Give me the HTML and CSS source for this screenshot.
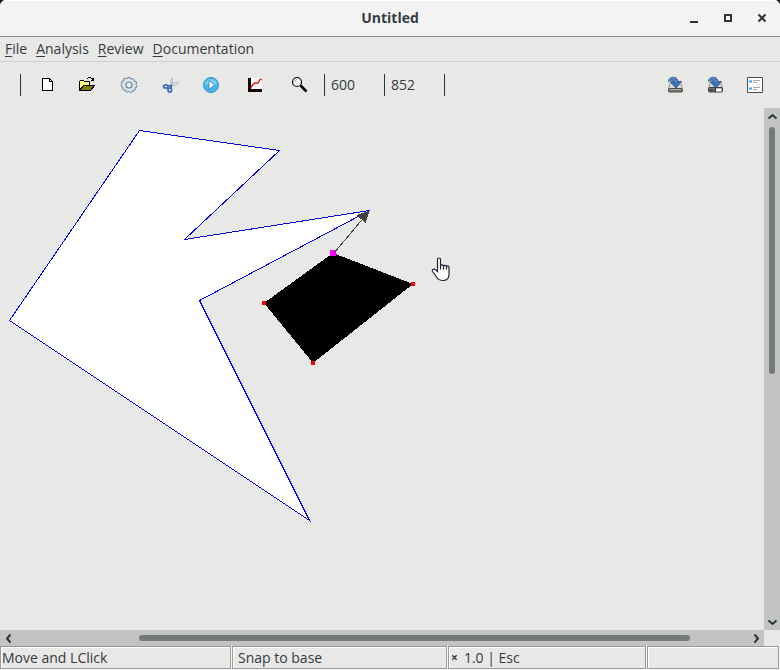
FILE: index.html
```html
<!DOCTYPE html>
<html lang="en">
<head>
<meta charset="utf-8">
<title>Untitled</title>
<link rel="stylesheet" href="styles.css">
</head>
<body>
<div class="window">
  <header class="titlebar">
    <h1 class="title">Untitled</h1>
    <div class="window-buttons">
      <button type="button" class="window-button" aria-label="Minimize"><svg width="16" height="16" viewBox="0 0 16 16"><path d="M4 11h8v2H4z"/></svg></button>
      <button type="button" class="window-button" aria-label="Maximize"><svg width="16" height="16" viewBox="0 0 16 16"><path fill-rule="evenodd" d="M4 4h8v8H4zM6 6v4h4V6z"/></svg></button>
      <button type="button" class="window-button" aria-label="Close"><svg width="16" height="16" viewBox="0 0 16 16"><path d="M4.500 4.500l7 7M11.500 4.500l-7 7" fill="none" stroke="#2e3436" stroke-width="2"/></svg></button>
    </div>
  </header>

  <nav class="menubar" aria-label="Menu">
    <a class="menu" href="#file"><u>F</u>ile</a>
    <a class="menu" href="#analysis"><u>A</u>nalysis</a>
    <a class="menu" href="#review"><u>R</u>eview</a>
    <a class="menu" href="#documentation"><u>D</u>ocumentation</a>
  </nav>

  <div class="toolbar" role="toolbar" aria-label="Tools">
    <span class="separator"></span>
    <div class="tools">
      <button type="button" class="tool" aria-label="New">
        <svg class="icon" viewBox="0 0 24 24" shape-rendering="crispEdges"><path d="M9.500 5.500h7l3 3v9h-10z" fill="#fff" stroke="#000"/><path d="M16.500 5.500v3h3" fill="none" stroke="#000"/></svg>
      </button>
      <button type="button" class="tool" aria-label="Open">
        <svg class="icon" viewBox="0 0 24 24" shape-rendering="crispEdges">
          <path d="M4.500 17.500v-9l1-1h3l1 1h5v4" fill="#ffff78" stroke="#000"/>
          <path d="M4.500 17.500l4-5h11l-4 5z" fill="#808000" stroke="#000"/>
          <path d="M12 5.500h1M13 4.500h3M16 5.500h2M17 6.500h2M16 7.500h3M18.500 5v2" fill="none" stroke="#000"/>
        </svg>
      </button>
      <button type="button" class="tool" aria-label="Settings">
        <svg class="icon" viewBox="0 0 24 24" fill="none" stroke="#66879f">
          <path d="M12 4.500l1.500.3.700 1.600 1.800-.8 1.300.9-.1 1.900 1.900.2.600 1.400-1 1.500 1.300 1.200-.3 1.500-1.800.6.500 1.900-1 1-1.900-.3-.3 1.800-1.500.5L12 18.300l-1.700.9-1.500-.5-.3-1.800-1.900.3-1-1 .5-1.900-1.800-.6L4 12.200 5.300 11l-1-1.500.6-1.400 1.900-.2-.1-1.900L8 5.100l1.800.8.700-1.200z" fill="#dce3e8"/>
          <circle cx="12" cy="12" r="3" fill="#e8e8e7" stroke-width="1.200"/>
        </svg>
      </button>
      <button type="button" class="tool" aria-label="Cut">
        <svg class="icon" viewBox="0 0 24 24" fill="none">
          <path d="M13 5c-2 2-2 5 0 8l1.500-1c-.8-2-.5-4-1.500-7z" fill="#c9d3d8" stroke="#9dafb8" stroke-width=".6"/>
          <path d="M20 9c-3-.5-6 1-9 4l1 1.500c3-1.500 6-2 8-5.500z" fill="#d6dcdf" stroke="#9dafb8" stroke-width=".6"/>
          <path d="M9 13l3.500-.5-1 3.500" stroke="#3467a4" stroke-width="1.500"/>
          <ellipse cx="6.800" cy="13.500" rx="2.200" ry="1.600" stroke="#3971b8" stroke-width="1.800"/>
          <ellipse cx="10.800" cy="17" rx="1.800" ry="2.100" stroke="#3971b8" stroke-width="1.800"/>
        </svg>
      </button>
      <button type="button" class="tool" aria-label="Run">
        <svg class="icon" viewBox="0 0 24 24">
          <circle cx="10" cy="12" r="7.500" fill="#45b4ea" stroke="#3b91cf"/>
          <path d="M4 12a6 6 0 0 1 12 0c-4-2-8-2-12 0z" fill="#82cef2"/>
          <path d="M8 7.500v9l5.500-4.500z" fill="#fff" stroke="#2583c2" stroke-width=".8"/>
        </svg>
      </button>
      <button type="button" class="tool" aria-label="Plot">
        <svg class="icon" viewBox="0 0 24 24"><path d="M5 5h14v14H5z" fill="#fff"/><path d="M5 5h3v11h11v3H5z" fill="#120000"/><path d="M8 14.500l2-3 1.500-1.500h3.500L17 6.500h2" fill="none" stroke="#f11a0c" stroke-width="1.400"/></svg>
      </button>
      <button type="button" class="tool" aria-label="Zoom">
        <svg class="icon" viewBox="0 0 24 24"><circle cx="12" cy="9" r="4.500" fill="#f6f6f4" stroke="#000" stroke-width="1.200"/><path d="M9.800 9a2.500 2.500 0 0 1 2.500-2.500" fill="none" stroke="#aaa"/><path d="M15.500 12.500l6 6" stroke="#000" stroke-width="2.600"/></svg>
      </button>
    </div>
    <span class="separator"></span>
    <output class="coordinate" aria-label="X">600</output>
    <span class="separator"></span>
    <output class="coordinate" aria-label="Y">852</output>
    <span class="separator"></span>
    <div class="tools tools-end">
      <button type="button" class="tool tool-small" aria-label="Save">
        <svg class="icon" viewBox="0 0 24 24">
          <path d="M7.500 8.500h10l2 7h-14z" fill="#d5d8cf" stroke="#85887f" stroke-width=".8"/>
          <rect x="5.500" y="15.500" width="14" height="3.500" rx="1" fill="#72756f" stroke="#4b4e49"/>
          <path d="M7 16.500h11" stroke="#aaaea5"/>
          <path d="M5.500 8.500c0-5.500 9-6 9.500 0h3.500L13 15 7.500 9h3c0-2-3-2.500-5-.5z" fill="#4172b6" stroke="#264f8f" stroke-width=".8"/>
          <path d="M6.500 6.500c2-2.300 6-1.500 6.500 2.500" fill="none" stroke="#8db0df" stroke-width=".8"/>
        </svg>
      </button>
      <button type="button" class="tool tool-small" aria-label="Save as">
        <svg class="icon" viewBox="0 0 24 24">
          <path d="M7.500 8.500h10l2 7h-14z" fill="#d5d8cf" stroke="#85887f" stroke-width=".8"/>
          <rect x="5.500" y="14.500" width="14" height="4.500" rx="1" fill="#72756f" stroke="#3b3e39"/>
          <path d="M13 15.500h5.500v3H13z" fill="#fff"/><path d="M12.500 15v4M6.500 17h4" stroke="#222"/>
          <path d="M5.500 8.500c0-5.500 9-6 9.500 0h3.500L13 15 7.500 9h3c0-2-3-2.500-5-.5z" fill="#4172b6" stroke="#264f8f" stroke-width=".8"/>
          <path d="M6.500 6.500c2-2.300 6-1.500 6.500 2.500" fill="none" stroke="#8db0df" stroke-width=".8"/>
        </svg>
      </button>
      <button type="button" class="tool tool-small" aria-label="Properties">
        <svg class="icon" viewBox="0 0 24 24"><path d="M4.500 4.500h15v15h-15z" fill="#fbfbfb" stroke="#4a4d4f"/><path d="M6 8.500h3M6 15.500h3" stroke="#3c9cf5" stroke-width="2"/><path d="M10 7.500h7M10 9.500h4M10 14.500h7M10 16.500h4" stroke="#a9acae"/></svg>
      </button>
    </div>
  </div>

  <main class="workspace">
    <svg class="canvas" role="img" aria-label="Drawing">
      <g shape-rendering="crispEdges">
        <polygon points="139.500,22.500 279.500,42.500 184.500,131.500 369.500,102.500 199.500,192.500 309.500,412.500 9.500,212.500" fill="#fff" stroke="#0000e6"/>
        <polygon points="333,145 413,176 313,255 264,195" fill="#000"/>
        <path d="M262 193h4v4h-4zM411 174h4v4h-4zM311 253h4v4h-4z" fill="#f00"/>
        <path d="M330 142h6v6h-6z" fill="#f0f"/>
        <path d="M334 145L366 107" stroke="#404040"/>
        <path d="M369.500 102.500L356.500 107L365.500 115z" fill="#404040"/>
      </g>
      <path d="M437.500 151.500c0-2 3-2 3 0v6c.5-1 2.500-1 3 .5.5-1 2.500-1 3 .5 1-1 2.500-.5 2.500 1v7c0 3.500-2 6-6 6-3 0-5-1-6.500-3.500l-4-5.500c-1-1.500 1-3 2.500-2l2.500 2z" fill="#fff" stroke="#1d2033" stroke-width="1.200"/>
      <path d="M440.500 157v4.500M443.500 158v3.500M446.500 158.500v3" stroke="#1d2033" stroke-width="1.200"/>
    </svg>
    <div class="scrollbar scrollbar-vertical">
      <button type="button" class="scroll-button" aria-label="Scroll up"><svg width="16" height="16" viewBox="0 0 16 16"><path d="M4.500 10.500L8.500 7l4 3.500"/></svg></button>
      <div class="track"><div class="thumb"></div></div>
      <button type="button" class="scroll-button" aria-label="Scroll down"><svg width="16" height="16" viewBox="0 0 16 16"><path d="M4.500 6.500l4 3.500 4-3.500"/></svg></button>
    </div>
    <div class="scrollbar scrollbar-horizontal">
      <button type="button" class="scroll-button" aria-label="Scroll left"><svg width="16" height="16" viewBox="0 0 16 16"><path d="M10.500 4.500L7 8.500l3.500 4"/></svg></button>
      <div class="track"><div class="thumb"></div></div>
      <button type="button" class="scroll-button" aria-label="Scroll right"><svg width="16" height="16" viewBox="0 0 16 16"><path d="M6.500 4.500l3.500 4-3.500 4"/></svg></button>
    </div>
  </main>

  <footer class="statusbar">
    <div class="status status-message">Move and LClick</div>
    <div class="status">Snap to base</div>
    <div class="status status-scale"><span class="times">×</span>1.0 | Esc</div>
    <div class="status"></div>
  </footer>
</div>
</body>
</html>
```

FILE: styles.css
```css
* {
  box-sizing: border-box;
}

body {
  margin: 0;
  background: #1c1518;
  color: #353b3d;
  font: 14px/20px "Open Sans", "Noto Sans", sans-serif;
}

.window {
  display: flex;
  flex-direction: column;
  height: 100vh;
  overflow: hidden;
  background: #e8e8e7;
  border-radius: 6px 6px 0 0;
}

button {
  display: flex;
  align-items: center;
  justify-content: center;
  padding: 0;
  border: 0;
  background: none;
  color: inherit;
}

.titlebar {
  display: grid;
  grid-template-columns: 1fr auto 1fr;
  align-items: center;
  height: 37px;
  padding-bottom: 1px;
  border-top: 1px solid #fff;
  border-bottom: 1px solid #8c8f8e;
  background: #f3f3f3;
}

.title {
  grid-column: 2;
  margin: 0;
  font-size: 14px;
  font-weight: 700;
}

.window-buttons {
  display: flex;
  justify-content: flex-end;
  padding-right: 1px;
}

.window-button {
  width: 34px;
  height: 34px;
  fill: #2e3436;
}

.menubar {
  display: flex;
  gap: 9px;
  align-items: center;
  height: 25px;
  padding: 0 5px;
  border-bottom: 1px solid #cfd0ce;
}

.menu {
  color: inherit;
  text-decoration: none;
}

.menu u {
  text-underline-offset: 2px;
}

.toolbar {
  display: flex;
  align-items: center;
  height: 46px;
  padding: 0 5px 0 20px;
}

.separator {
  width: 1px;
  height: 22px;
  background: #2e3436;
}

.tools {
  display: flex;
  padding: 0 6px 0 3px;
}

.tools-end {
  margin-left: auto;
  padding: 0;
}

.tool {
  width: 42px;
  height: 40px;
}

.tool-small {
  width: 40px;
}

.icon {
  width: 24px;
  height: 24px;
}

.coordinate {
  width: 59px;
  padding-left: 6px;
}

.workspace {
  display: grid;
  flex: 1;
  grid-template: minmax(0, 1fr) 16px / minmax(0, 1fr) 16px;
  min-height: 0;
}

.canvas {
  width: 100%;
  height: 100%;
}

.scrollbar {
  display: flex;
  background: #c2c4c3;
}

.scrollbar-vertical {
  flex-direction: column;
}

.scroll-button {
  flex: none;
  width: 16px;
  height: 16px;
  fill: none;
  stroke: #2e3436;
  stroke-width: 2;
}

.track {
  flex: 1;
  padding: 3px 5px;
}

.scrollbar-horizontal .track {
  padding: 5px 0;
}

.thumb {
  height: 51%;
  border-radius: 3px;
  background: #757a79;
}

.scrollbar-horizontal .thumb {
  width: 75.3%;
  height: 6px;
  margin-left: 16.8%;
}

.statusbar {
  display: grid;
  grid-template-columns: 231fr 215fr 198fr 132fr;
  gap: 1px;
  height: 24px;
  padding: 0 1px 1px 0;
  background: #f7f7f7;
}

.status {
  padding: 1px 0 0 5px;
  border: 1px solid #989b9a;
  background: #e8e8e7;
  box-shadow: inset 1px 1px #fff;
}

.status-message {
  padding-left: 1px;
}

.status-scale {
  display: flex;
  gap: 6px;
  padding-left: 2px;
}

.times {
  font-size: 12px;
  font-weight: 700;
}
```
